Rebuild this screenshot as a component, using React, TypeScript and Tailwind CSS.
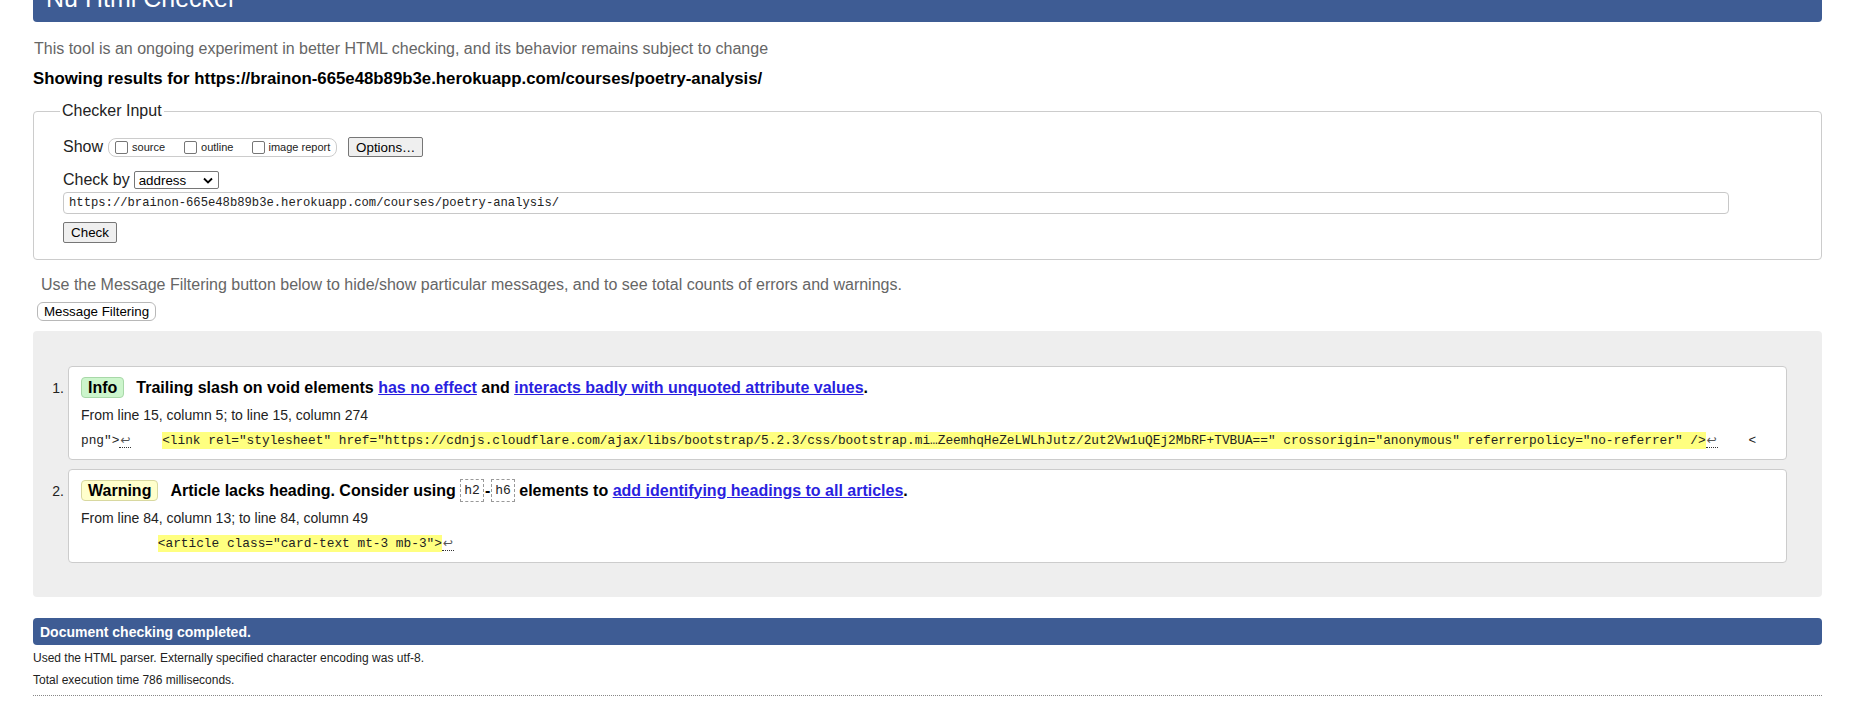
import React from "react";

const sans = { fontFamily: '"Liberation Sans", Arial, sans-serif' };

function Checkbox() {
  return (
    <input
      type="checkbox"
      readOnly
      className="appearance-none w-[13px] h-[13px] border border-[#767676] rounded-[2px] bg-white shrink-0"
    />
  );
}

function Lf() {
  return (
    <span className="inline-block w-[12px] text-center text-[#555] border-b border-dotted border-[#333] leading-[14px] [font-family:'DejaVu_Sans',sans-serif] text-[12px]">
      ↩
    </span>
  );
}

function Badge({ kind }: { kind: "info" | "warning" }) {
  const cls =
    kind === "info"
      ? "bg-[#ccf5cc] border-[#a8d8a8]"
      : "bg-[#ffffcc] border-[#d8d8a0]";
  return (
    <span
      className={`inline-flex items-center h-[21px] px-[6px] border rounded-[4px] font-bold text-[16px] leading-[18px] text-black ${cls}`}
    >
      {kind === "info" ? "Info" : "Warning"}
    </span>
  );
}

function Link({ children }: { children: React.ReactNode }) {
  return <span className="text-[#2a1fe0] underline">{children}</span>;
}

function CodeBox({ children }: { children: React.ReactNode }) {
  return (
    <span className="inline-flex items-center h-[23px] px-[3px] border border-dashed border-[#999] text-[13px] font-normal text-[#222] [font-family:'Liberation_Mono',monospace]">
      {children}
    </span>
  );
}

export default function App() {
  const mono = "[font-family:'Liberation_Mono',monospace]";
  return (
    <div
      className="w-[1866px] h-[726px] overflow-hidden bg-white flex flex-col text-black"
      style={sans}
    >
      <div className="ml-[33px] w-[1789px] flex flex-col">
        {/* header */}
        <div className="-mt-[20px] h-[42px] bg-[#3e5c94] rounded-[4px] pl-[13px] pt-[3px] text-white text-[25px] leading-[30px]">
          Nu Html Checker
        </div>

        <p className="mt-[18px] pl-[1px] text-[16px] leading-[18px] text-[#666]">
          This tool is an ongoing experiment in better HTML checking, and its behavior remains subject to change
        </p>
        <p className="mt-[12px] text-[16.8px] leading-[18px] font-bold text-black">
          Showing results for https://brainon-665e48b89b3e.herokuapp.com/courses/poetry-analysis/
        </p>

        {/* checker input */}
        <fieldset className="mt-[14px] border border-[#cccccc] rounded-[4px] px-0 pb-[16px] pt-[17px]">
          <legend className="ml-[26px] px-[2px] text-[16px] leading-[18px] text-[#222]">
            Checker Input
          </legend>
          <div className="pl-[29px] flex flex-col items-start">
            <div className="flex items-center h-[20px]">
              <span className="text-[16px] leading-[18px] text-[#222]">Show</span>
              <div className="ml-[5px] h-[19px] border border-[#cccccc] rounded-[8px] flex items-center pl-[6px] pr-[6px] text-[11px] leading-[13px] text-[#222]">
                <Checkbox />
                <span className="ml-[4px]">source</span>
                <span className="ml-[19px] flex"><Checkbox /></span>
                <span className="ml-[4px]">outline</span>
                <span className="ml-[19px] flex"><Checkbox /></span>
                <span className="ml-[3px]">image report</span>
              </div>
              <button className="ml-[11px] w-[75px] h-[20px] bg-[#efefef] border border-[#767676] rounded-[2px] text-[13.33px] leading-[15px] text-black">
                Options…
              </button>
            </div>

            <div className="mt-[13px] flex items-center h-[20px]">
              <span className="text-[16px] leading-[18px] text-[#222]">Check by</span>
              <div className="ml-[4px] w-[85px] h-[18px] border border-[#767676] rounded-[2px] flex items-center pl-[4px] pr-[5px] text-[13.33px] leading-[15px] bg-white text-black">
                <span className="flex-1">address</span>
                <svg width="10" height="7" viewBox="0 0 10 7">
                  <path d="M1 1.5 L5 5.5 L9 1.5" fill="none" stroke="#000" strokeWidth="1.8" />
                </svg>
              </div>
            </div>

            <div className={`mt-[2px] w-[1666px] h-[22px] border border-[#c8c8c8] rounded-[4px] flex items-center pl-[5px] text-[12.2px] text-[#222] ${mono}`}>
              https://brainon-665e48b89b3e.herokuapp.com/courses/poetry-analysis/
            </div>

            <button className="mt-[8px] w-[54px] h-[21px] bg-[#efefef] border border-[#767676] rounded-[2px] text-[13.33px] leading-[15px] text-black">
              Check
            </button>
          </div>
        </fieldset>

        <p className="mt-[16px] pl-[8px] text-[16px] leading-[18px] text-[#666]">
          Use the Message Filtering button below to hide/show particular messages, and to see total counts of errors and warnings.
        </p>
        <div className="mt-[8px] pl-[4px] flex">
          <button className="w-[119px] h-[19px] border border-[#b8b8b8] rounded-[6px] bg-white text-[13.33px] leading-[15px] text-black">
            Message Filtering
          </button>
        </div>

        {/* results */}
        <div className="mt-[10px] bg-[#eeeeee] rounded-[4px] pt-[35px] pb-[34px] pr-[35px]">
          <ol className="flex flex-col gap-[9px]">
            <li className="flex">
              <div className="w-[35px] shrink-0 pt-[14px] pr-[4px] text-right text-[14px] leading-[16px] text-[#222]">1.</div>
              <div className="flex-1 bg-white border border-[#cccccc] rounded-[4px] pl-[12px] pt-[10px] pb-[10px] overflow-hidden">
                <div className="flex items-center h-[21px] text-[16px] leading-[18px] font-bold whitespace-nowrap">
                  <Badge kind="info" />
                  <span className="ml-[12px]">
                    Trailing slash on void elements <Link>has no effect</Link> and{" "}
                    <Link>interacts badly with unquoted attribute values</Link>.
                  </span>
                </div>
                <div className="mt-[9px] text-[14px] leading-[16px] text-[#222]">
                  From line 15, column 5; to line 15, column 274
                </div>
                <div className={`mt-[9px] h-[17px] flex items-center whitespace-pre text-[12.8px] leading-[17px] text-[#222] ${mono}`}>
                  <span>png"&gt;</span>
                  <Lf />
                  <span>{"    "}</span>
                  <span className="bg-[#ffff80] h-[17px] leading-[17px]">
                    {'<link rel="stylesheet" href="https://cdnjs.cloudflare.com/ajax/libs/bootstrap/5.2.3/css/bootstrap.mi…ZeemhqHeZeLWLhJutz/2ut2Vw1uQEj2MbRF+TVBUA==" crossorigin="anonymous" referrerpolicy="no-referrer" />'}
                  </span>
                  <Lf />
                  <span>{"    <"}</span>
                </div>
              </div>
            </li>
            <li className="flex">
              <div className="w-[35px] shrink-0 pt-[14px] pr-[4px] text-right text-[14px] leading-[16px] text-[#222]">2.</div>
              <div className="flex-1 bg-white border border-[#cccccc] rounded-[4px] pl-[12px] pt-[10px] pb-[10px] overflow-hidden">
                <div className="flex items-center h-[21px] text-[16px] leading-[18px] font-bold whitespace-nowrap">
                  <Badge kind="warning" />
                  <span className="ml-[12px] flex items-center">
                    <span>Article lacks heading. Consider using&nbsp;</span>
                    <CodeBox>h2</CodeBox>
                    <span className="mx-[1px]">-</span>
                    <CodeBox>h6</CodeBox>
                    <span>&nbsp;elements to&nbsp;</span>
                    <Link>add identifying headings to all articles</Link>
                    <span>.</span>
                  </span>
                </div>
                <div className="mt-[9px] text-[14px] leading-[16px] text-[#222]">
                  From line 84, column 13; to line 84, column 49
                </div>
                <div className={`mt-[9px] h-[17px] flex items-center whitespace-pre text-[12.8px] leading-[17px] text-[#222] ${mono}`}>
                  <span>{"          "}</span>
                  <span className="bg-[#ffff80] h-[17px] leading-[17px]">
                    {'<article class="card-text mt-3 mb-3">'}
                  </span>
                  <Lf />
                </div>
              </div>
            </li>
          </ol>
        </div>

        {/* footer */}
        <div className="mt-[21px] h-[27px] bg-[#3e5c94] rounded-[4px] flex items-center pl-[7px] text-white font-bold text-[14px] leading-[16px]">
          Document checking completed.
        </div>
        <p className="mt-[6px] text-[12px] leading-[14px] text-[#222]">
          Used the HTML parser. Externally specified character encoding was utf-8.
        </p>
        <p className="mt-[8px] text-[12px] leading-[14px] text-[#222]">
          Total execution time 786 milliseconds.
        </p>
        <div className="mt-[8px] border-t border-dotted border-[#888]" />
      </div>
    </div>
  );
}
